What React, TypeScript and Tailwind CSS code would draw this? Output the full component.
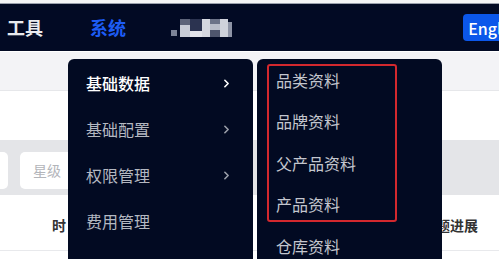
import { ChevronRight } from 'lucide-react'

const font = { fontFamily: '"Noto Sans CJK SC", "Noto Sans", sans-serif' }

const mainItems = ['基础数据', '基础配置', '权限管理', '费用管理', '店铺监控']
const subItems = ['品类资料', '品牌资料', '父产品资料', '产品资料', '仓库资料']

function BlurLogo() {
  // pixelated / mosaic logo
  return (
    <div className="flex h-[19px] items-end">
      <div className="mb-[1px] h-[6px] w-[6px] bg-[#7d8497]" />
      <div className="ml-[3px] flex h-[18px] w-[10px] flex-col">
        <div className="h-[6px] bg-[#5d6479]" />
        <div className="flex-1 bg-[#c8ccd6]" />
      </div>
      <div className="flex h-[18px] w-[12px] flex-col">
        <div className="h-[12px] bg-[#2b3350]" />
        <div className="flex-1 bg-[#e2e4ea]" />
      </div>
      <div className="h-[18px] w-[8px] bg-[#d5d8e0]" />
      <div className="flex h-[18px] w-[10px] flex-col">
        <div className="h-[5px] bg-[#6c7388]" />
        <div className="h-[6px] bg-[#b9bdc9]" />
        <div className="flex-1 bg-[#4f566d]" />
      </div>
      <div className="h-[18px] w-[8px] bg-[#cfd2db]" />
      <div className="h-[15px] w-[4px] bg-[#8e94a6]" />
    </div>
  )
}

export default function App() {
  return (
    <div className="relative h-[259px] w-[499px] overflow-hidden bg-white" style={font}>
      <div className="h-[4px] border-b border-[#9aa0ad] bg-[#f4f5f7]" />
      <nav className="flex h-[47px] items-center bg-[#020a24] pl-[7px]">
        <span className="text-[18px] font-bold text-[#e9eaee]">工具</span>
        <span className="ml-[47px] text-[18px] font-bold text-[#1d5cf5]">系统</span>
        <div className="ml-[45px]">
          <BlurLogo />
        </div>
        <div className="ml-auto mr-[-30px] flex h-[27px] items-center rounded-[4px] bg-[#0b57ea] px-[5px] text-[16px] font-medium text-white">
          English
        </div>
      </nav>
      <div className="h-[1px] bg-white" />
      <div className="h-[39px] border-b border-[#e6e7ea] bg-[#f3f3f6]" />
      <div className="h-[49px] bg-white" />
      <div className="flex h-[55px] items-end gap-[12px] bg-[#e4e5e8] pb-[6px]">
        <div className="ml-[-40px] h-[37px] w-[48px] rounded-[5px] bg-white" />
        <div className="flex h-[37px] w-[120px] items-center rounded-[5px] bg-white pl-[13px] text-[14px] text-[#b3b5ba]">
          星级
        </div>
      </div>
      <div className="flex h-[56px] items-center border-b border-[#e8e9ec] bg-white pt-[5px] text-[14px] font-bold text-[#333]">
        <span className="ml-[52px]">时</span>
        <span className="ml-auto mr-[21px]">题进展</span>
      </div>

      {/* first level menu */}
      <div className="absolute left-[68px] top-[59px] h-[220px] w-[185px] rounded-t-[6px] bg-[#020a22] pt-[1px]">
        {mainItems.map((t, i) => (
          <div key={t} className="flex h-[46px] items-center justify-between pl-[18px] pr-[20px]">
            <span className={`text-[16px] ${i === 0 ? 'font-medium text-white' : 'text-[#b4b8c1]'}`}>{t}</span>
            {i < 3 && (
              <ChevronRight
                size={13}
                strokeWidth={3}
                className={i === 0 ? 'text-white' : 'text-[#9a9ea9]'}
              />
            )}
          </div>
        ))}
      </div>

      {/* second level menu */}
      <div className="absolute left-[257px] top-[59px] h-[220px] w-[185px] rounded-t-[6px] bg-[#020a22]">
        {subItems.map((t) => (
          <div key={t} className="flex h-[41.5px] items-center pl-[19px] text-[16px] text-[#c3c6ce]">
            {t}
          </div>
        ))}
      </div>

      {/* highlight box */}
      <div className="absolute left-[267px] top-[64px] h-[158px] w-[130px] rounded-[3px] border-2 border-[#d3282e]" />
    </div>
  )
}
